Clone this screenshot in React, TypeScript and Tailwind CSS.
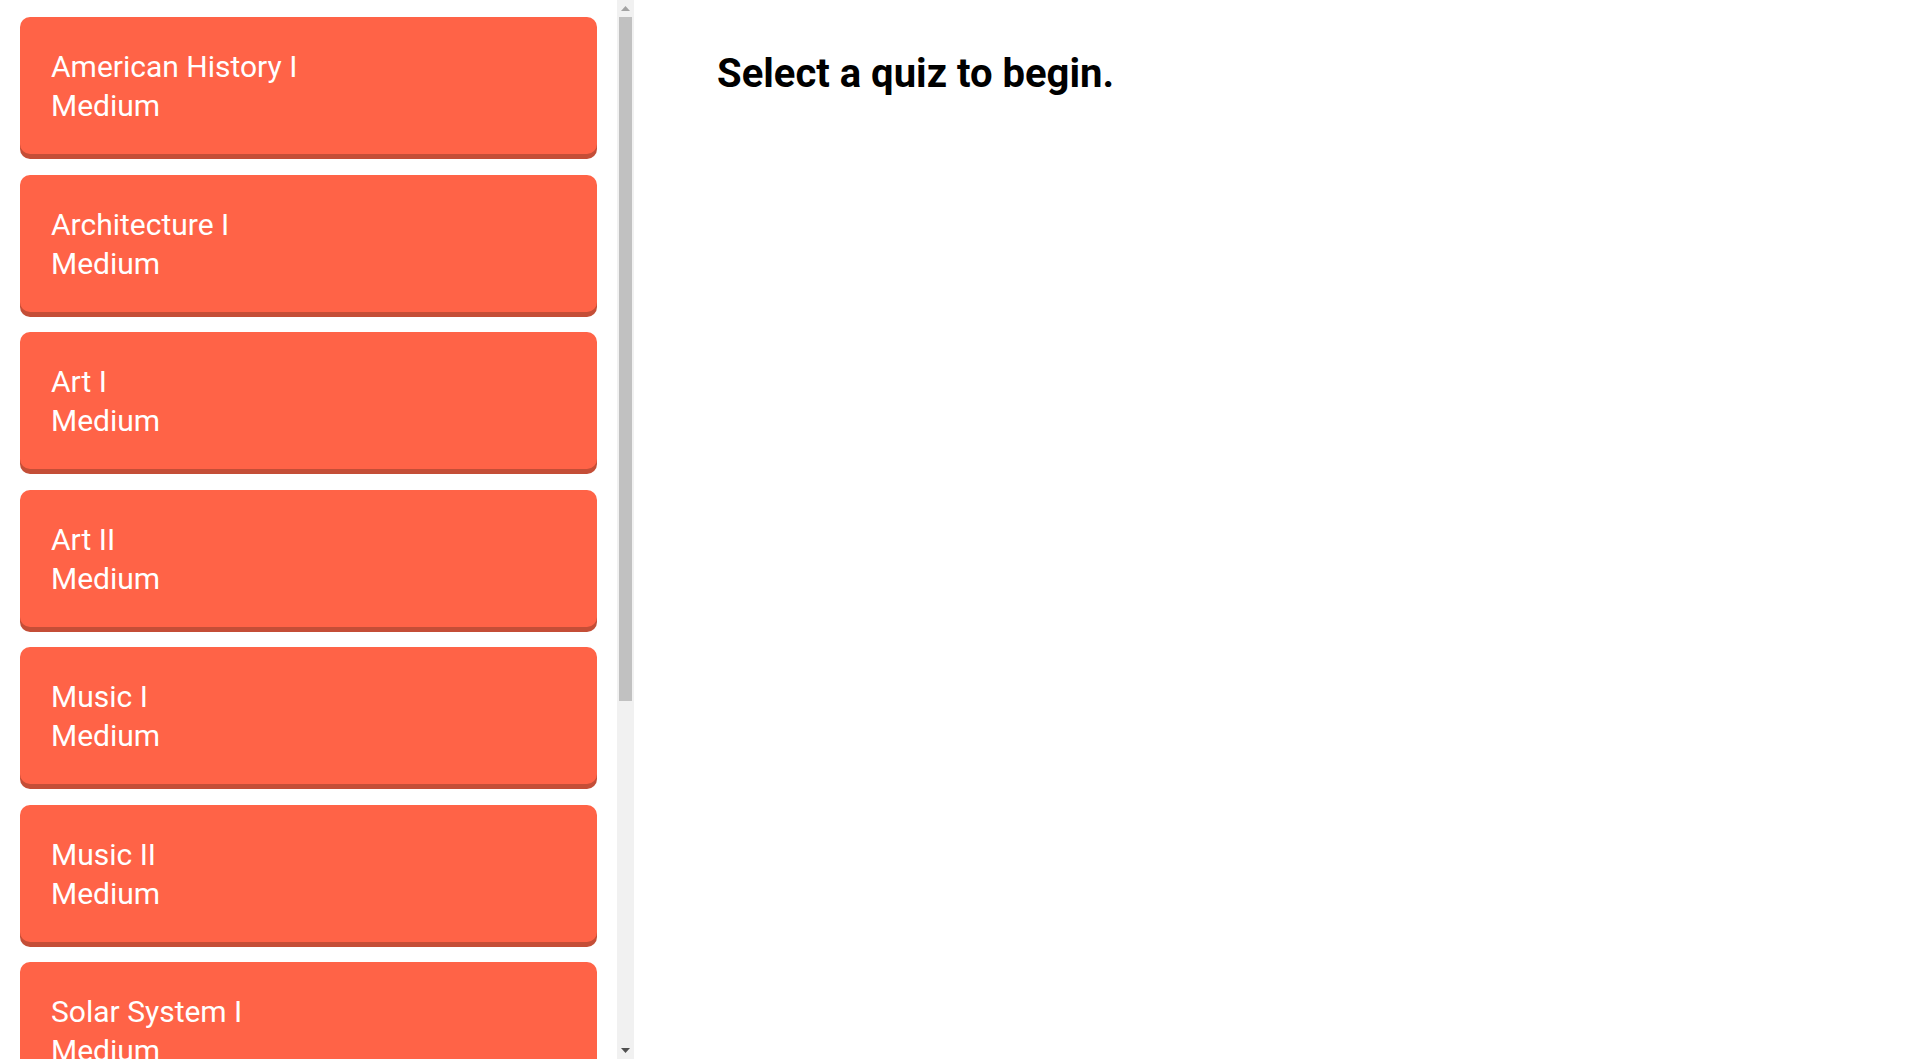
import { useState } from "react";

type Quiz = {
  id: number;
  title: string;
  difficulty: string;
};

const quizzes: Quiz[] = [
  { id: 1, title: "American History I", difficulty: "Medium" },
  { id: 2, title: "Architecture I", difficulty: "Medium" },
  { id: 3, title: "Art I", difficulty: "Medium" },
  { id: 4, title: "Art II", difficulty: "Medium" },
  { id: 5, title: "Music I", difficulty: "Medium" },
  { id: 6, title: "Music II", difficulty: "Medium" },
  { id: 7, title: "Solar System I", difficulty: "Medium" },
  { id: 8, title: "Solar System II", difficulty: "Medium" },
  { id: 9, title: "World History I", difficulty: "Medium" },
  { id: 10, title: "World History II", difficulty: "Medium" },
];

function QuizCard({ quiz, onSelect }: { quiz: Quiz; onSelect: (q: Quiz) => void }) {
  return (
    <button
      className="mx-[20px] flex shrink-0 flex-col items-start rounded-[10px] bg-[#ff6347] px-[31px] pt-[30px] pb-[29px] text-left text-[30px] leading-[39px] text-white shadow-[0_5px_0_#c44e37] cursor-pointer"
      onClick={() => onSelect(quiz)}
    >
      <span>{quiz.title}</span>
      <span>{quiz.difficulty}</span>
    </button>
  );
}

// classic scrollbar look, drawn by hand so it shows the same everywhere
function FakeScrollbar() {
  return (
    <div className="flex h-full w-[17px] shrink-0 flex-col bg-[#f1f1f1]">
      <div className="flex h-[17px] shrink-0 items-center justify-center">
        <svg width="9" height="5" viewBox="0 0 9 5">
          <path d="M4.5 0 L9 5 L0 5 Z" fill="#a3a3a3" />
        </svg>
      </div>
      <div className="flex-1 px-[2px]">
        <div className="h-[684px] bg-[#c1c1c1]" />
      </div>
      <div className="flex h-[17px] shrink-0 items-center justify-center">
        <svg width="9" height="5" viewBox="0 0 9 5">
          <path d="M0 0 L9 0 L4.5 5 Z" fill="#505050" />
        </svg>
      </div>
    </div>
  );
}

export default function App() {
  const [selected, setSelected] = useState<Quiz | null>(null);

  return (
    <div className="flex h-screen w-full bg-white font-['Roboto',sans-serif]">
      {/* quiz list */}
      <aside className="flex h-full w-[634px] shrink-0">
        <div className="h-full flex-1 overflow-y-auto [scrollbar-width:none]">
          <div className="flex flex-col gap-[20.5px] pt-[17px] pb-[5px]">
            {quizzes.map((q) => (
              <QuizCard key={q.id} quiz={q} onSelect={setSelected} />
            ))}
          </div>
        </div>
        <FakeScrollbar />
      </aside>

      {/* main panel */}
      <main className="flex-1 pl-[83px] pt-[50px]">
        <h1 className="text-[40px] font-bold leading-[47px] text-black">
          {selected ? selected.title : "Select a quiz to begin."}
        </h1>
      </main>
    </div>
  );
}
